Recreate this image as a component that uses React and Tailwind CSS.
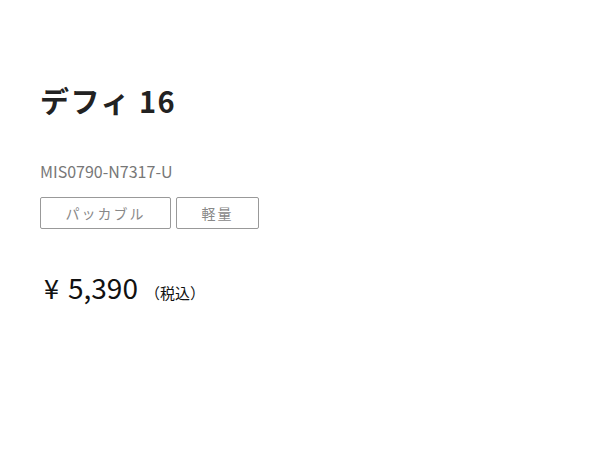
export default function App() {
  return (
    <div className="w-[600px] h-[450px] bg-white pl-[40px] pt-[80px]" style={{ fontFamily: '"Noto Sans CJK JP", "Noto Sans", sans-serif' }}>
      <h1 className="text-[29px] leading-[40px] font-bold text-[#222] tracking-[1.5px]">デフィ 16</h1>
      <div className="mt-[40px] text-[16px] leading-[22px] text-[#777]">MIS0790-N7317-U</div>
      <div className="mt-[15px] flex gap-[5px]">
        <div className="w-[131px] h-[32px] border border-[#999] rounded-[2px] flex items-center justify-center text-[14px] text-[#888] tracking-[2px]">パッカブル</div>
        <div className="w-[83px] h-[32px] border border-[#999] rounded-[2px] flex items-center justify-center text-[14px] text-[#888] tracking-[2px]">軽量</div>
      </div>
      <div className="mt-[40px] flex items-baseline text-[#111]">
        <span className="ml-[4px] text-[27px] leading-[36px]">¥</span>
        <span className="ml-[9px] text-[28px] leading-[36px]">5,390</span>
        <span className="ml-[7px] text-[15px]">（税込）</span>
      </div>
    </div>
  );
}
